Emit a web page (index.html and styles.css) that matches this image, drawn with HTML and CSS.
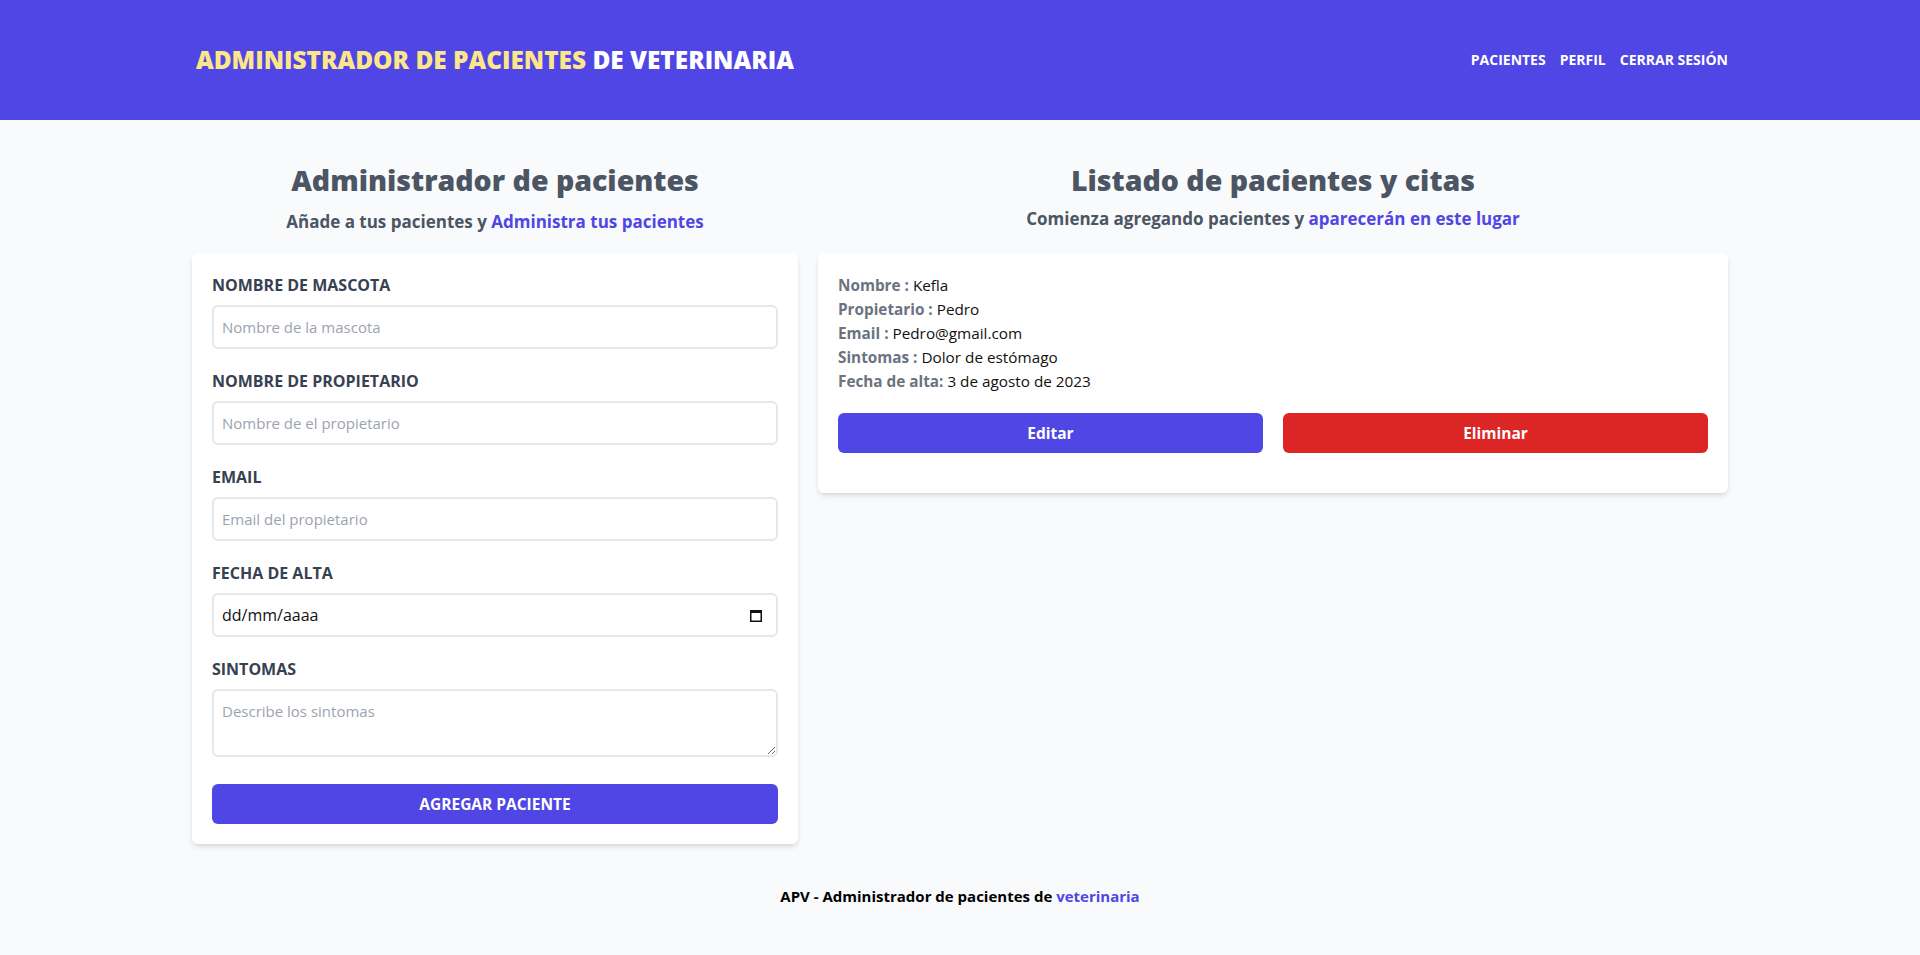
FILE: index.html
```html
<!DOCTYPE html>
<html lang="es">
<head>
<meta charset="utf-8">
<title>APV - Administrador de pacientes de veterinaria</title>
<link rel="stylesheet" href="styles.css">
</head>
<body>
<header class="topbar">
  <div class="topbar-inner">
    <h1 class="brand"><span class="brand-accent">Administrador de pacientes</span> de veterinaria</h1>
    <nav class="nav">
      <a href="#" class="nav-link">Pacientes</a>
      <a href="#" class="nav-link">Perfil</a>
      <a href="#" class="nav-link">Cerrar sesión</a>
    </nav>
  </div>
</header>

<main class="main">
  <section class="col-form">
    <h2 class="section-title">Administrador de pacientes</h2>
    <p class="section-sub sub-left">Añade a tus pacientes y <span class="accent">Administra tus pacientes</span></p>
    <form class="card form-card">
      <div class="field">
        <label class="label" for="mascota">Nombre de mascota</label>
        <input id="mascota" class="input" type="text" placeholder="Nombre de la mascota">
      </div>
      <div class="field">
        <label class="label" for="propietario">Nombre de propietario</label>
        <input id="propietario" class="input" type="text" placeholder="Nombre de el propietario">
      </div>
      <div class="field">
        <label class="label" for="email">Email</label>
        <input id="email" class="input" type="email" placeholder="Email del propietario">
      </div>
      <div class="field">
        <label class="label" for="fecha">Fecha de alta</label>
        <div id="fecha" class="input date-input">
          <span class="date-text">dd/mm/aaaa</span>
          <svg class="cal-icon" width="12" height="13" viewBox="0 0 12 13" aria-hidden="true">
            <rect x="0.75" y="1.75" width="10.5" height="10.5" fill="none" stroke="#111" stroke-width="1.5"/>
            <rect x="0" y="1" width="12" height="3" fill="#111"/>
          </svg>
        </div>
      </div>
      <div class="field field-last">
        <label class="label" for="sintomas">Sintomas</label>
        <textarea id="sintomas" class="input textarea" rows="2" placeholder="Describe los sintomas"></textarea>
      </div>
      <button type="button" class="btn btn-submit">Agregar paciente</button>
    </form>
  </section>

  <section class="col-list">
    <h2 class="section-title">Listado de pacientes y citas</h2>
    <p class="section-sub sub-right">Comienza agregando pacientes y <span class="accent">aparecerán en este lugar</span></p>
    <div class="card patient-card">
      <p class="row"><span class="key">Nombre :</span> Kefla</p>
      <p class="row"><span class="key">Propietario :</span> Pedro</p>
      <p class="row"><span class="key">Email :</span> Pedro@gmail.com</p>
      <p class="row"><span class="key">Sintomas :</span> Dolor de estómago</p>
      <p class="row"><span class="key">Fecha de alta:</span> 3 de agosto de 2023</p>
      <div class="actions">
        <button type="button" class="btn btn-edit">Editar</button>
        <button type="button" class="btn btn-delete">Eliminar</button>
      </div>
    </div>
  </section>
</main>

<footer class="footer">APV - Administrador de pacientes de <span class="accent">veterinaria</span></footer>
</body>
</html>
```

FILE: styles.css
```css
* { box-sizing: border-box; }

body {
  margin: 0;
  background: #f9fafb;
  font-family: "Open Sans", "Noto Sans", sans-serif;
  color: #111827;
  min-height: 955px;
}

.topbar {
  background: #4f46e5;
  height: 120px;
}

.topbar-inner {
  width: 1536px;
  margin: 0 auto;
  height: 100%;
  display: flex;
  align-items: center;
  justify-content: space-between;
  padding-left: 4px;
}

.brand {
  margin: 0;
  font-size: 24.4px;
  line-height: 32px;
  font-weight: 800;
  text-transform: uppercase;
  color: #ffffff;
}

.brand-accent { color: #fde68a; }

.nav {
  display: flex;
  gap: 14px;
}

.nav-link {
  color: #ffffff;
  text-decoration: none;
  text-transform: uppercase;
  font-weight: 700;
  font-size: 14px;
  line-height: 20px;
}

.main {
  width: 1536px;
  margin: 0 auto;
  padding-top: 42px;
  display: flex;
  gap: 20px;
  align-items: flex-start;
}

.col-form { width: 606px; flex: none; }
.col-list { flex: 1; }

.section-title {
  margin: 0;
  text-align: center;
  font-size: 28.5px;
  line-height: 36px;
  font-weight: 800;
  color: #4b5563;
}

.section-sub {
  text-align: center;
  font-size: 17px;
  line-height: 28px;
  font-weight: 700;
  color: #4b5563;
}

.sub-left { margin: 10px 0 17px; }
.sub-right { margin: 7px 0 20px; }

.accent { color: #4f46e5; }

.card {
  background: #ffffff;
  border-radius: 6px;
  box-shadow: 0 4px 6px -1px rgba(0,0,0,0.1), 0 2px 4px -2px rgba(0,0,0,0.1);
  padding: 20px;
}

.field { margin-bottom: 20px; }
.field-last { margin-bottom: 27px; }

.label {
  display: block;
  font-size: 16px;
  line-height: 24px;
  font-weight: 700;
  text-transform: uppercase;
  color: #374151;
}

.input {
  display: block;
  width: 100%;
  margin-top: 8px;
  padding: 8px;
  border: 2px solid #e5e7eb;
  border-radius: 6px;
  font-family: "Open Sans", "Noto Sans", sans-serif;
  font-size: 15px;
  line-height: 24px;
  color: #111827;
  background: #ffffff;
  outline: none;
}

.input::placeholder { color: #9ca3af; }

.date-input {
  display: flex;
  align-items: center;
  justify-content: space-between;
  padding-right: 14px;
}

.date-text { color: #111111; font-size: 16px; }

.cal-icon { flex: none; }

.textarea {
  height: 68px;
  resize: vertical;
}

.btn {
  display: block;
  border: none;
  border-radius: 6px;
  color: #ffffff;
  font-family: "Open Sans", "Noto Sans", sans-serif;
  font-weight: 700;
  font-size: 15.5px;
  height: 40px;
  cursor: pointer;
}

.btn-submit {
  width: 100%;
  background: #4f46e5;
  text-transform: uppercase;
}

.row {
  margin: 0;
  font-size: 15.3px;
  line-height: 24px;
  color: #111111;
}

.key {
  font-weight: 700;
  color: #6b7280;
}

.actions {
  display: flex;
  gap: 20px;
  margin: 20px 0;
}

.actions .btn { flex: 1; }

.btn-edit { background: #4f46e5; }
.btn-delete { background: #dc2626; }

.footer {
  margin-top: 40px;
  text-align: center;
  font-weight: 700;
  font-size: 15px;
  line-height: 24px;
  color: #000000;
}
```
